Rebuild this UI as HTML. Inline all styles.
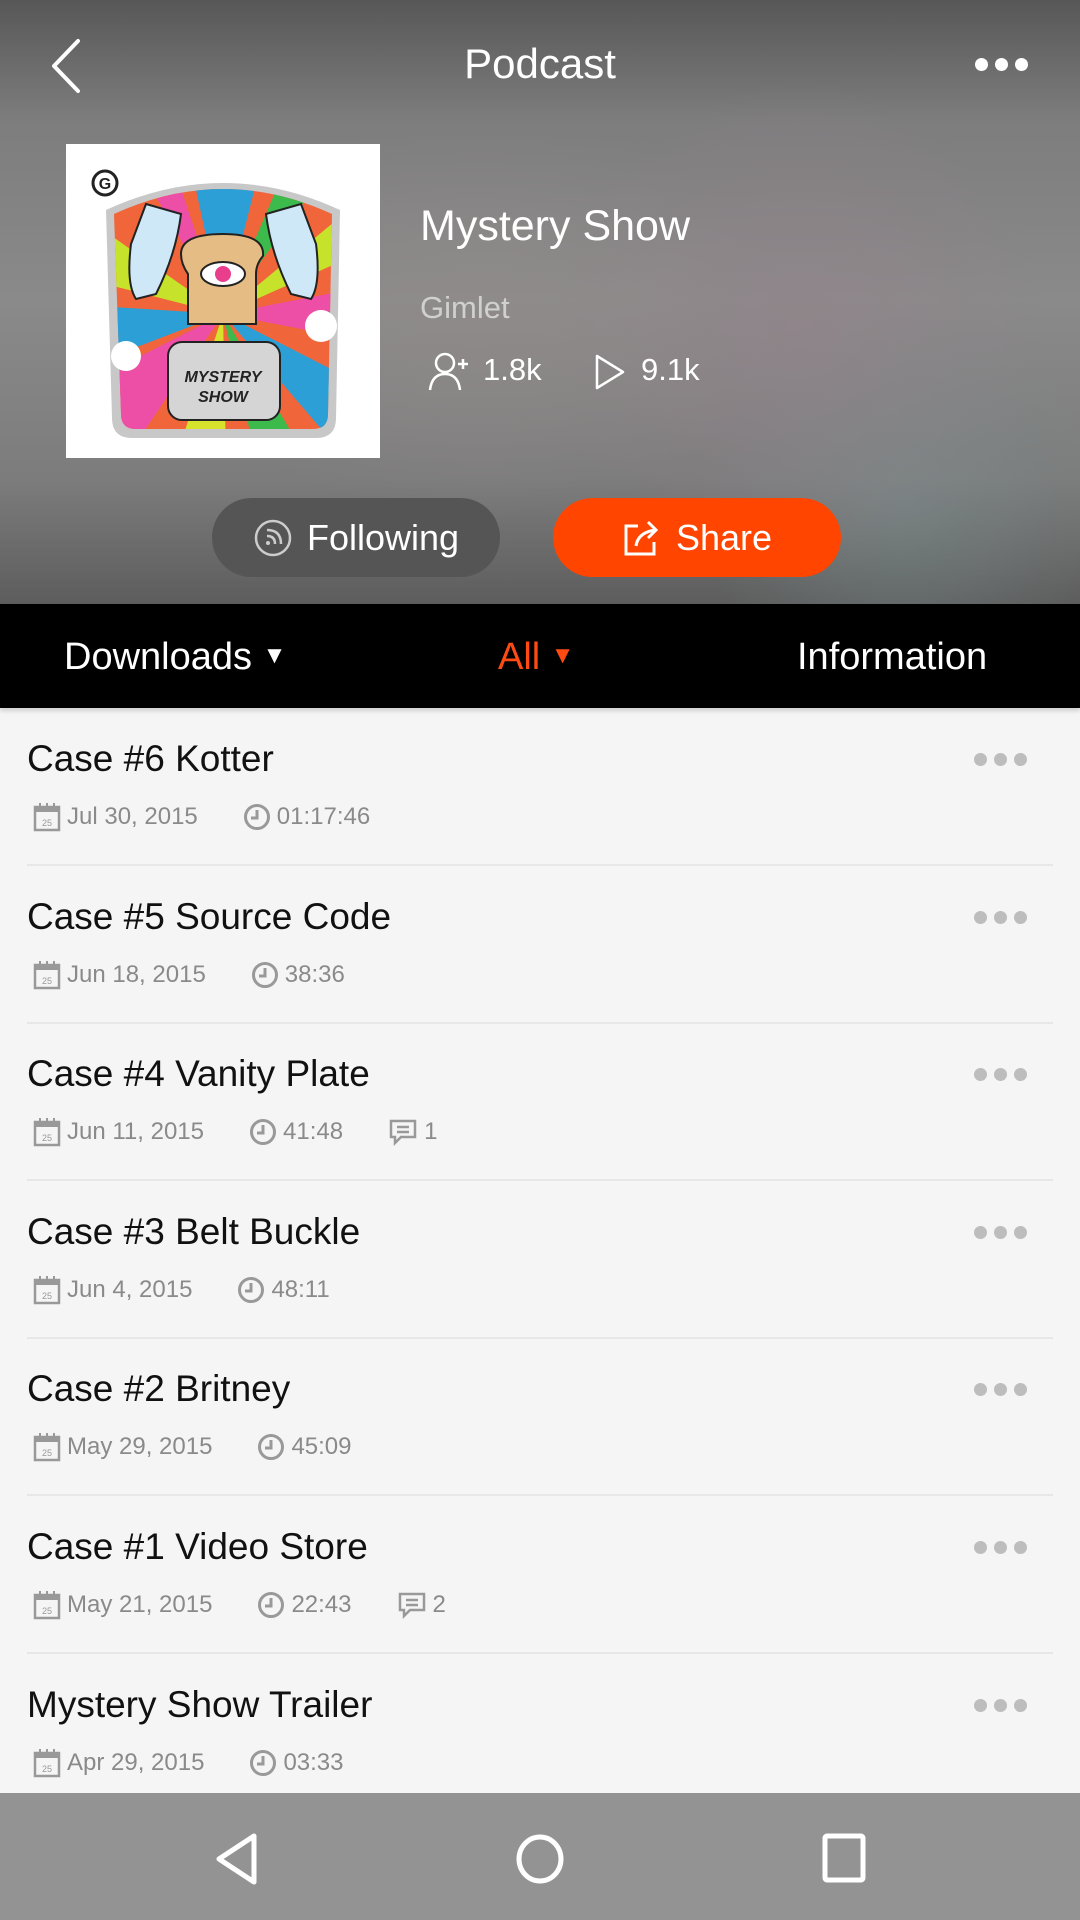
<!DOCTYPE html>
<html><head><meta charset="utf-8"><style>
*{margin:0;padding:0;box-sizing:border-box}
body{width:1080px;height:1920px;overflow:hidden;font-family:"Liberation Sans",sans-serif;background:#f4f5f4;position:relative}
.hdr{position:absolute;left:0;top:0;width:1080px;height:604px;background:
radial-gradient(ellipse 300px 200px at 480px 320px,rgba(150,140,140,.5),transparent),
radial-gradient(ellipse 250px 250px at 800px 330px,rgba(150,130,140,.5),transparent),
radial-gradient(ellipse 200px 200px at 900px 500px,rgba(120,140,140,.5),transparent),
linear-gradient(#575757 0,#7d7d7d 120px,#8a8a8a 300px,#7c7c7c 480px,#5d5d5d 604px)}
.t{position:absolute;color:#fff;white-space:nowrap}
.tabs{position:absolute;left:0;top:604px;width:1080px;height:104px;background:#000;box-shadow:0 3px 4px rgba(0,0,0,.15)}
.item{position:absolute;left:27px;width:1026px;height:130px;border-bottom:2px solid #e6e7e6}
.item .ti{position:absolute;left:0;top:1px;font-size:37px;color:#111;line-height:44px}
.item .mt{position:absolute;left:6px;top:66px;font-size:24px;color:#8a8a8a;display:flex;align-items:center;height:30px}
.item .mt svg{margin-right:6px}
.dots{position:absolute;right:26px;top:17px;display:flex;gap:7px}
.dots i{width:13px;height:13px;border-radius:50%;background:#bdbdbd;display:block}
.nav{position:absolute;left:0;top:1793px;width:1080px;height:127px;background:#939393}
</style></head><body>
<div class="hdr"></div>
<svg class="t" style="left:46px;top:38px" width="40" height="56" viewBox="0 0 40 56"><path d="M32 3 L8 28 L32 53" stroke="#fff" stroke-width="4" fill="none" stroke-linecap="round" stroke-linejoin="round"/></svg>
<div class="t" style="left:0;width:1080px;text-align:center;top:40px;font-size:42px">Podcast</div>
<div class="t" style="left:975px;top:58px;display:flex;gap:7px"><i style="width:13px;height:13px;border-radius:50%;background:#fff;display:block"></i><i style="width:13px;height:13px;border-radius:50%;background:#fff;display:block"></i><i style="width:13px;height:13px;border-radius:50%;background:#fff;display:block"></i></div>

<svg style="position:absolute;left:66px;top:144px" width="314" height="314" viewBox="0 0 314 314">
<rect width="314" height="314" fill="#fff"/>
<defs><clipPath id="b"><path d="M48 70 Q157 20 266 70 L262 270 Q262 285 247 285 L70 285 Q55 285 55 270 Z"/></clipPath></defs>
<path d="M40 66 Q157 12 274 66 L270 274 Q270 294 250 294 L66 294 Q46 294 46 274 Z" fill="#c8c8c8"/>
<g clip-path="url(#b)">
<rect x="0" y="0" width="314" height="314" fill="#f0663a"/>
<polygon points="157,170 0,60 0,130" fill="#c6e22b"/>
<polygon points="157,170 0,160 0,230" fill="#2b9fd6"/>
<polygon points="157,170 0,250 0,314 60,314" fill="#ed4ea6"/>
<polygon points="157,170 110,314 160,314" fill="#d6e22b"/>
<polygon points="157,170 190,314 240,314" fill="#3cba4b"/>
<polygon points="157,170 314,250 314,314 280,314" fill="#2b9fd6"/>
<polygon points="157,170 314,140 314,200" fill="#ed4ea6"/>
<polygon points="157,170 314,40 314,100" fill="#c6e22b"/>
<polygon points="157,170 120,0 200,0" fill="#2b9fd6"/>
<polygon points="157,170 60,0 100,0" fill="#ed4ea6"/>
<polygon points="157,170 230,0 280,0" fill="#3cba4b"/>
</g>
<path d="M65 100 Q60 140 70 155 L90 150 Q110 110 115 70 L80 60 Z" fill="#cfe8f7" stroke="#222" stroke-width="2"/>
<path d="M250 100 Q255 140 245 155 L225 150 Q205 110 200 70 L235 60 Z" fill="#cfe8f7" stroke="#222" stroke-width="2"/>
<path d="M115 110 Q115 90 157 90 Q199 90 197 112 Q190 120 190 130 L190 180 L122 180 L122 130 Q115 120 115 110Z" fill="#e5bd84" stroke="#222" stroke-width="2"/>
<ellipse cx="157" cy="130" rx="22" ry="12" fill="#fff" stroke="#222" stroke-width="2"/>
<circle cx="157" cy="130" r="8" fill="#e83e8c"/>
<circle cx="60" cy="212" r="15" fill="#fff"/><circle cx="255" cy="182" r="16" fill="#fff"/>
<rect x="102" y="198" width="112" height="78" rx="14" fill="#d5d5d5" stroke="#222" stroke-width="2"/>
<text x="157" y="238" text-anchor="middle" font-family="Liberation Sans" font-weight="bold" font-style="italic" font-size="16" fill="#222">MYSTERY</text>
<text x="157" y="258" text-anchor="middle" font-family="Liberation Sans" font-weight="bold" font-style="italic" font-size="16" fill="#222">SHOW</text>
<circle cx="39" cy="39" r="12" fill="none" stroke="#222" stroke-width="3"/><text x="39" y="45" text-anchor="middle" font-size="16" font-weight="bold" font-family="Liberation Sans" fill="#222">G</text>
</svg>

<div class="t" style="left:420px;top:202px;font-size:43px">Mystery Show</div>
<div class="t" style="left:420px;top:290px;font-size:31px;color:#d0d0d0">Gimlet</div>
<svg class="t" style="left:428px;top:352px" width="44" height="40" viewBox="0 0 44 40"><circle cx="17" cy="11" r="9" fill="none" stroke="#fff" stroke-width="2.5"/><path d="M2 38 Q4 22 17 22 Q30 22 32 38" fill="none" stroke="#fff" stroke-width="2.5"/><path d="M30 12 h10 M35 7 v10" stroke="#fff" stroke-width="2.5"/></svg>
<div class="t" style="left:483px;top:352px;font-size:31px">1.8k</div>
<svg class="t" style="left:594px;top:353px" width="32" height="38" viewBox="0 0 32 38"><path d="M3 3 L29 19 L3 35 Z" fill="none" stroke="#fff" stroke-width="2.5" stroke-linejoin="round"/></svg>
<div class="t" style="left:641px;top:352px;font-size:31px">9.1k</div>

<div class="t" style="left:212px;top:498px;width:288px;height:79px;border-radius:40px;background:#555;display:flex;align-items:center;justify-content:center;font-size:36px"><svg width="40" height="40" viewBox="0 0 40 40" style="margin-right:14px"><circle cx="20" cy="20" r="17" fill="none" stroke="#ccc" stroke-width="2.5"/><circle cx="15" cy="25" r="2" fill="#ccc"/><path d="M14 18 Q22 18 22 26 M14 12 Q28 12 28 26" fill="none" stroke="#ccc" stroke-width="2.5"/></svg>Following</div>
<div class="t" style="left:553px;top:498px;width:288px;height:79px;border-radius:40px;background:#ff4500;display:flex;align-items:center;justify-content:center;font-size:36px"><svg width="40" height="40" viewBox="0 0 40 40" style="margin-right:14px"><path d="M16 8 H4 V36 H32 V24" fill="none" stroke="#fff" stroke-width="3"/><path d="M14 28 Q16 14 34 12 M26 4 L34 12 L26 20" fill="none" stroke="#fff" stroke-width="3"/></svg>Share</div>

<div class="tabs">
<div class="t" style="left:64px;top:32px;font-size:38px">Downloads <span style="font-size:24px;position:relative;top:-6px">▼</span></div>
<div class="t" style="left:498px;top:32px;font-size:38px;color:#ff4a12">All <span style="font-size:24px;position:relative;top:-6px">▼</span></div>
<div class="t" style="left:797px;top:32px;font-size:38px">Information</div>
</div>

<svg width="0" height="0" style="position:absolute"><defs>
<symbol id="cal" viewBox="0 0 28 30"><rect x="2" y="5" width="24" height="23" fill="none" stroke="#999" stroke-width="2.5"/><rect x="2" y="5" width="24" height="5" fill="#999"/><path d="M7 1v6M14 1v6M21 1v6" stroke="#999" stroke-width="2"/><text x="14" y="24" font-size="9" text-anchor="middle" fill="#999" font-family="Liberation Sans">25</text></symbol>
<symbol id="clk" viewBox="0 0 28 28"><circle cx="14" cy="14" r="11.5" fill="none" stroke="#999" stroke-width="3"/><path d="M14 7v8h-6" fill="none" stroke="#999" stroke-width="3"/></symbol>
<symbol id="cmt" viewBox="0 0 30 30"><path d="M3 4h24v16H13l-6 6v-6H3z" fill="none" stroke="#999" stroke-width="2.5"/><path d="M9 10h12M9 15h12" stroke="#999" stroke-width="2.5"/></symbol>
</defs></svg>

<div class="item" style="top:736px"><div class="ti">Case #6 Kotter</div><div class="dots"><i></i><i></i><i></i></div><div class="mt"><svg width="28" height="30"><use href="#cal"/></svg>Jul 30, 2015<svg width="28" height="28" style="margin-left:45px"><use href="#clk"/></svg>01:17:46</div></div>
<div class="item" style="top:894px"><div class="ti">Case #5 Source Code</div><div class="dots"><i></i><i></i><i></i></div><div class="mt"><svg width="28" height="30"><use href="#cal"/></svg>Jun 18, 2015<svg width="28" height="28" style="margin-left:45px"><use href="#clk"/></svg>38:36</div></div>
<div class="item" style="top:1051px"><div class="ti">Case #4 Vanity Plate</div><div class="dots"><i></i><i></i><i></i></div><div class="mt"><svg width="28" height="30"><use href="#cal"/></svg>Jun 11, 2015<svg width="28" height="28" style="margin-left:45px"><use href="#clk"/></svg>41:48<svg width="30" height="30" style="margin-left:45px"><use href="#cmt"/></svg>1</div></div>
<div class="item" style="top:1209px"><div class="ti">Case #3 Belt Buckle</div><div class="dots"><i></i><i></i><i></i></div><div class="mt"><svg width="28" height="30"><use href="#cal"/></svg>Jun 4, 2015<svg width="28" height="28" style="margin-left:45px"><use href="#clk"/></svg>48:11</div></div>
<div class="item" style="top:1366px"><div class="ti">Case #2 Britney</div><div class="dots"><i></i><i></i><i></i></div><div class="mt"><svg width="28" height="30"><use href="#cal"/></svg>May 29, 2015<svg width="28" height="28" style="margin-left:45px"><use href="#clk"/></svg>45:09</div></div>
<div class="item" style="top:1524px"><div class="ti">Case #1 Video Store</div><div class="dots"><i></i><i></i><i></i></div><div class="mt"><svg width="28" height="30"><use href="#cal"/></svg>May 21, 2015<svg width="28" height="28" style="margin-left:45px"><use href="#clk"/></svg>22:43<svg width="30" height="30" style="margin-left:45px"><use href="#cmt"/></svg>2</div></div>
<div class="item" style="top:1682px;border:none"><div class="ti">Mystery Show Trailer</div><div class="dots"><i></i><i></i><i></i></div><div class="mt"><svg width="28" height="30"><use href="#cal"/></svg>Apr 29, 2015<svg width="28" height="28" style="margin-left:45px"><use href="#clk"/></svg>03:33</div></div>

<div class="nav">
<svg style="position:absolute;left:214px;top:40px" width="46" height="52" viewBox="0 0 46 52"><path d="M40 3 L5 26 L40 49 Z" fill="none" stroke="#fff" stroke-width="5" stroke-linejoin="round"/></svg>
<svg style="position:absolute;left:515px;top:40px" width="50" height="52" viewBox="0 0 50 52"><ellipse cx="25" cy="26" rx="21" ry="22" fill="none" stroke="#fff" stroke-width="5"/></svg>
<svg style="position:absolute;left:822px;top:40px" width="44" height="50" viewBox="0 0 44 50"><rect x="3" y="3" width="38" height="44" rx="2" fill="none" stroke="#fff" stroke-width="5"/></svg>
</div>
</body></html>
